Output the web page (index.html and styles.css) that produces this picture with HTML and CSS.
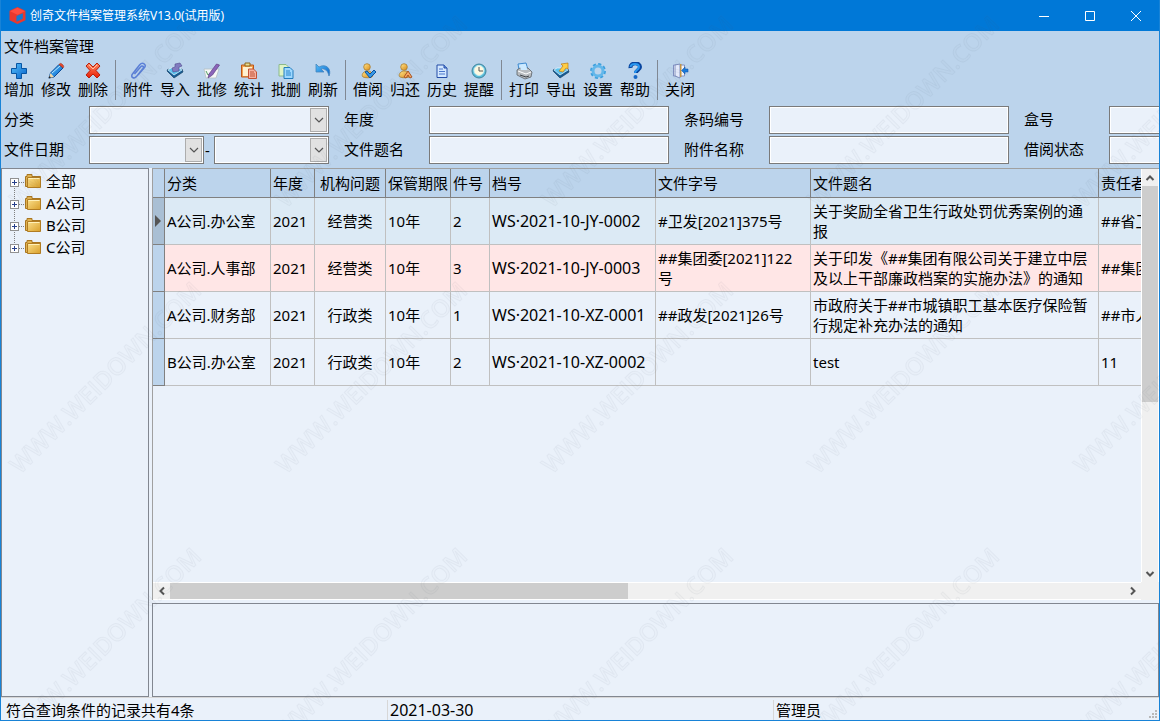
FILE: index.html
```html
<!DOCTYPE html>
<html lang="zh-CN">
<head>
<meta charset="utf-8">
<title>创奇文件档案管理系统V13.0(试用版)</title>
<link rel="stylesheet" href="styles.css">
</head>
<body>
<svg class="defs" width="0" height="0" aria-hidden="true">
  <defs>
    <linearGradient id="blue" x1="0" y1="0" x2="1" y2="1"><stop offset="0" stop-color="#56c0fb"/><stop offset="1" stop-color="#0560c8"/></linearGradient>
    <linearGradient id="red" x1="0" y1="0" x2="0" y2="1"><stop offset="0" stop-color="#ff8a62"/><stop offset="1" stop-color="#e81c05"/></linearGradient>
    <linearGradient id="gold" x1="0" y1="0" x2="1" y2="1"><stop offset="0" stop-color="#ffe58c"/><stop offset="1" stop-color="#df8c14"/></linearGradient>
    <linearGradient id="folder" x1="0" y1="0" x2="1" y2="1"><stop offset="0" stop-color="#fbe08c"/><stop offset="1" stop-color="#d99f2a"/></linearGradient>
    <symbol id="i-folder" viewBox="0 0 16 14"><path d="M.5 12.500V2.500h1.500v-2h5v2h8.500v10z" fill="#dfb252" stroke="#a97621"/><path d="M2.500 13.500v-10h13v10z" fill="url(#folder)" stroke="#b17c22"/><path d="M3.500 4.500h11" stroke="#fff0b8"/></symbol>
    <symbol id="i-down" viewBox="0 0 10 6"><path d="M1 1l4 4 4-4" fill="none" stroke="#555" stroke-width="1.200"/></symbol>
    <symbol id="i-chev" viewBox="0 0 10 10"><path d="M1.500 3l3.500 3.500L8.500 3" fill="none" stroke="#555" stroke-width="2"/></symbol>
    <symbol id="i-tray" viewBox="0 0 18 18"><path d="M1 9l7 7 9-6-1-3-8 4-6-4z" fill="#155b94" stroke="#1c4666" stroke-width=".7"/><path d="M2 8l6 5 8-5-3-2H5z" fill="#5bc3ee" stroke="#e8f6ff" stroke-width=".7"/></symbol>
    <symbol id="i-person" viewBox="0 0 18 18"><path d="M4 15c-2-2 0-5 3-6h3c3 1 5 4 3 6-2 1-7 1-9 0z" fill="url(#gold)" stroke="#a87c30" stroke-width=".8"/><circle cx="8" cy="5" r="3.300" fill="url(#gold)" stroke="#a87c30" stroke-width=".8"/></symbol>
    <pattern id="mark" width="266" height="266" patternUnits="userSpaceOnUse"><text class="mark-text" transform="translate(20 209) rotate(-45)">WWW.WEIDOWN.COM</text></pattern>
  </defs>
</svg>
<div class="window">
  <header class="titlebar">
    <svg class="logo" viewBox="0 0 16 16"><path d="M8 0l7.500 3.500v9L8 16 .5 12.500v-9z" fill="#e9382d"/><path d="M1 4l7 3.300L15 4 8 .7z" fill="#ff4d40"/><path d="M7 8.500l6-2.700v5.200l-6 2.800z" fill="#1479d2"/></svg>
    <h1 class="title">创奇文件档案管理系统V13.0(试用版)</h1>
    <button class="winbtn" aria-label="最小化"><svg viewBox="0 0 10 10"><path d="M0 5.500h10"/></svg></button>
    <button class="winbtn" aria-label="最大化"><svg viewBox="0 0 10 10"><path d="M.5.500h9v9h-9z"/></svg></button>
    <button class="winbtn" aria-label="关闭窗口"><svg viewBox="0 0 10 10"><path d="M0 0l10 10M10 0L0 10"/></svg></button>
  </header>
  <h2 class="caption">文件档案管理</h2>
  <nav class="toolbar">
    <div class="tools">
      <button class="tool"><svg viewBox="0 0 18 18"><path d="M7 3h5v4h4v5h-4v4H7v-4H3V7h4z" fill="#5f7f9c" opacity=".6"/><path d="M6.500 1.500h5v5h5v5h-5v5h-5v-5h-5v-5h5z" fill="url(#blue)" stroke="#0755a3"/></svg>增加</button>
      <button class="tool"><svg viewBox="0 0 18 18"><path d="M2 16l1.500-5L12 2.500 16 6l-9 9z" fill="url(#blue)" stroke="#0a4c99"/><path d="M12 2.500C13 1 14 1 15.500 2.500S17 5 16 6z" fill="#e7482d" stroke="#9f2d1a" stroke-width=".6"/><path d="M2 16l1.500-5L7 15z" fill="#f4d9a8"/><path d="M1.500 16.500l1-2.500 1.500 1.500z" fill="#222"/><path d="M5 11l8-7" stroke="#b8e7ff"/></svg>修改</button>
      <button class="tool"><svg viewBox="0 0 18 18"><path d="M2 4l3-3 4 4 4-4 3 3-4 4.500 4 4.500-3 3-4-4-4 4-3-3 4-4.500z" fill="url(#red)" stroke="#b9200d"/><path d="M5 3l4 4 4-4" fill="none" stroke="#ffc0a5"/></svg>删除</button>
    </div>
    <div class="tools">
      <button class="tool"><svg viewBox="0 0 18 18"><path d="M5.500 12l6-7c1.500-2 4-.5 2.500 1.500l-6.500 8c-2.500 3-6.500.5-4-2.500L10.500 3c3-3.500 7.500-.5 5 2.500L9 13" fill="none" stroke="#5b80d8" stroke-width="1.500"/></svg>附件</button>
      <button class="tool"><svg viewBox="0 0 18 18"><use href="#i-tray"/><path d="M9 2l5-1 2 3-3 1v4l-6 1-1-4 3-1z" fill="#807bc0" stroke="#504b8d" stroke-width=".6"/></svg>导入</button>
      <button class="tool"><svg viewBox="0 0 18 18"><path d="M1 7h15l-3 9H3z" fill="#f5f7f6" stroke="#b5bfc3" stroke-width=".8"/><path d="M3 9l2 4 3-2" fill="none" stroke="#54a163"/><path d="M6 12l7.500-10 3 1-7 10-4.500 3z" fill="#8b64ba" stroke="#604184" stroke-width=".7"/></svg>批修</button>
      <button class="tool"><svg viewBox="0 0 18 18"><path d="M1.500 3h12v12h-12z" fill="#f2a14f" stroke="#bf5617"/><path d="M5 1h5v3H5z" fill="#e9dc94" stroke="#8c671d"/><path d="M3 5h9v9H3z" fill="#fff1d0"/><path d="M8.500 7h5l3 3v6.500h-8z" fill="#f6b2a0" stroke="#c15235"/><path d="M10 10h4M10 12h5M10 14h5" stroke="#c15235"/></svg>统计</button>
      <button class="tool"><svg viewBox="0 0 18 18"><path d="M2 2.500h7l3 3V14H2z" fill="#dff4c7" stroke="#8cba8c"/><path d="M7 5.500h6l3 3v8H7z" fill="#9ed8ff" stroke="#237cbd"/><path d="M9 9h4M9 11h5M9 13h5" stroke="#2886cc"/></svg>批删</button>
      <button class="tool"><svg viewBox="0 0 18 18"><path d="M2 2v8h8L7 7c4-1 7 2 8 7 3-7-3-13-10-9z" fill="url(#blue)" stroke="#4685bd" stroke-width=".8"/></svg>刷新</button>
    </div>
    <div class="tools">
      <button class="tool"><svg viewBox="0 0 18 18"><use href="#i-person"/><path d="M6 10l2-1 3 3 4-4 2 2-6 6z" fill="#3697e6" stroke="#0a529f"/></svg>借阅</button>
      <button class="tool"><svg viewBox="0 0 18 18"><use href="#i-person"/><path d="M8 15l4-6 4 6-2 1-2-3-2 3z" fill="#ffad65" stroke="#a95422"/></svg>归还</button>
      <button class="tool"><svg viewBox="0 0 18 18"><path d="M4 3h7l3 3v9.500H4z" fill="#d3e8ff" stroke="#244da7"/><path d="M11 3v3h3" fill="#6695e0" stroke="#244da7"/><path d="M6 7h4M6 9.500h6M6 12h6" stroke="#4a76cb"/></svg>历史</button>
      <button class="tool"><svg viewBox="0 0 18 18"><circle cx="9" cy="9" r="7" fill="#58bbd7" stroke="#43859e"/><circle cx="9" cy="8.500" r="5" fill="#fff9df" stroke="#c8edf3"/><path d="M9 5v4h4" fill="none" stroke="#555"/></svg>提醒</button>
    </div>
    <div class="tools">
      <button class="tool"><svg viewBox="0 0 18 18"><path d="M3 2l8-1 2 7H4z" fill="#bfe4ff" stroke="#3f8acf"/><path d="M2 8l3-2h8l4 4-1 5-6 2-8-4z" fill="#b8bcc0" stroke="#5c6268" stroke-width=".8"/><path d="M3 9l8 3 5-2" fill="none" stroke="#fff"/><path d="M5 13l6 2 3-1" stroke="#404449" fill="none"/><path d="M4.500 3l6-1 2 6H6z" fill="#cdeaff"/></svg>打印</button>
      <button class="tool"><svg viewBox="0 0 18 18"><use href="#i-tray"/><path d="M9 2l7-1v6l-2-1-3 4-4-1 4-5z" fill="#ffcd42" stroke="#bb7b15" stroke-width=".7"/></svg>导出</button>
      <button class="tool"><svg viewBox="0 0 18 18"><circle cx="9" cy="9" r="6.700" fill="none" stroke="#3c9fdd" stroke-width="2.500" stroke-dasharray="3 2.260"/><circle cx="9" cy="9" r="5" fill="none" stroke="#63b7ea" stroke-width="3"/></svg>设置</button>
      <button class="tool"><svg viewBox="0 0 18 18"><path d="M4.500 6C4 0 14 0 14 5c0 3-4 3-4 6" fill="none" stroke="#08459f" stroke-width="4"/><path d="M4.500 5C5 1 13 1 13 5c0 3-4 3-4 6" fill="none" stroke="#2997ef" stroke-width="2"/><circle cx="9.500" cy="15" r="2" fill="#1767c5"/></svg>帮助</button>
    </div>
    <div class="tools">
      <button class="tool"><svg viewBox="0 0 18 18"><path d="M2.500 3h11v11h-11z" fill="#f5f8ff" stroke="#8190c2"/><path d="M4 3l5-1v14l-5-2z" fill="#e4eafb" stroke="#6c7db2" stroke-width=".8"/><path d="M9 2h1.500v13H9z" fill="#c69645"/><path d="M10.500 8.500L14 5v2h3v3h-3v2z" fill="#187bdd" stroke="#0c52aa" stroke-width=".5"/></svg>关闭</button>
    </div>
  </nav>
  <form class="filters">
    <div class="field"><label for="f-class">分类</label><span class="combo"><select id="f-class"><option></option></select><span class="arrow"><svg><use href="#i-down"/></svg></span></span></div>
    <div class="field"><label for="f-year">年度</label><input id="f-year" type="text"></div>
    <div class="field"><label for="f-code">条码编号</label><input id="f-code" type="text"></div>
    <div class="field"><label for="f-box">盒号</label><input id="f-box" type="text"></div>
    <div class="field"><label for="f-from">文件日期</label><span class="combo"><select id="f-from"><option></option></select><span class="arrow"><svg><use href="#i-down"/></svg></span></span><span class="dash">-</span><span class="combo"><select aria-label="截止日期"><option></option></select><span class="arrow"><svg><use href="#i-down"/></svg></span></span></div>
    <div class="field"><label for="f-name">文件题名</label><input id="f-name" type="text"></div>
    <div class="field"><label for="f-att">附件名称</label><input id="f-att" type="text"></div>
    <div class="field"><label for="f-state">借阅状态</label><input id="f-state" type="text"></div>
  </form>
  <main class="content">
    <ul class="tree">
      <li><button class="expander" aria-label="展开全部"></button><svg class="folder"><use href="#i-folder"/></svg>全部</li>
      <li><button class="expander" aria-label="展开A公司"></button><svg class="folder"><use href="#i-folder"/></svg>A公司</li>
      <li><button class="expander" aria-label="展开B公司"></button><svg class="folder"><use href="#i-folder"/></svg>B公司</li>
      <li><button class="expander" aria-label="展开C公司"></button><svg class="folder"><use href="#i-folder"/></svg>C公司</li>
    </ul>
    <section class="records">
      <div class="grid">
        <div class="viewport">
          <table>
            <colgroup><col class="c-mark"><col class="c-class"><col class="c-year"><col class="c-org"><col class="c-keep"><col class="c-item"><col class="c-file"><col class="c-doc"><col class="c-name"><col class="c-owner"></colgroup>
            <thead><tr><th></th><th>分类</th><th>年度</th><th class="mid">机构问题</th><th>保管期限</th><th>件号</th><th>档号</th><th>文件字号</th><th>文件题名</th><th>责任者</th></tr></thead>
            <tbody>
              <tr class="current"><th><svg class="pointer" viewBox="0 0 6 12"><path d="M0 0l6 6-6 6z"/></svg></th><td>A公司.办公室</td><td>2021</td><td class="mid">经营类</td><td>10年</td><td>2</td><td class="code">WS·2021-10-JY-0002</td><td class="doc">#卫发[2021]375号</td><td>关于奖励全省卫生行政处罚优秀案例的通报</td><td class="cut">##省卫生厅</td></tr>
              <tr class="alert"><th></th><td>A公司.人事部</td><td>2021</td><td class="mid">经营类</td><td>10年</td><td>3</td><td class="code">WS·2021-10-JY-0003</td><td class="doc">##集团委[2021]122号</td><td>关于印发《##集团有限公司关于建立中层及以上干部廉政档案的实施办法》的通知</td><td class="cut">##集团</td></tr>
              <tr><th></th><td>A公司.财务部</td><td>2021</td><td class="mid">行政类</td><td>10年</td><td>1</td><td class="code">WS·2021-10-XZ-0001</td><td class="doc">##政发[2021]26号</td><td>市政府关于##市城镇职工基本医疗保险暂行规定补充办法的通知</td><td class="cut">##市人</td></tr>
              <tr><th></th><td>B公司.办公室</td><td>2021</td><td class="mid">行政类</td><td>10年</td><td>2</td><td class="code">WS·2021-10-XZ-0002</td><td class="doc"></td><td>test</td><td class="cut">11</td></tr>
            </tbody>
          </table>
        </div>
        <div class="vscroll"><button class="step" aria-label="向上"><svg class="up"><use href="#i-chev"/></svg></button><div class="vtrack"><div class="vthumb"></div></div><button class="step" aria-label="向下"><svg><use href="#i-chev"/></svg></button></div>
        <div class="hscroll"><button class="step" aria-label="向左"><svg class="left"><use href="#i-chev"/></svg></button><div class="htrack"><div class="hthumb"></div></div><button class="step" aria-label="向右"><svg class="right"><use href="#i-chev"/></svg></button></div>
        <div class="corner"></div>
      </div>
      <div class="detail"></div>
    </section>
  </main>
  <footer class="status">
    <span>符合查询条件的记录共有4条</span><span class="code">2021-03-30</span><span>管理员</span>
    <svg class="grip" viewBox="0 0 8 8"><path d="M6 0h2v2H6zM3 3h2v2H3zM6 3h2v2H6zM0 6h2v2H0zM3 6h2v2H3zM6 6h2v2H6z"/></svg>
  </footer>
</div>
<svg class="watermark" aria-hidden="true"><rect width="100%" height="100%" fill="url(#mark)"/></svg>
</body>
</html>
```
FILE: styles.css
```css
* { box-sizing: border-box; }
body {
  margin: 0;
  font: 15px/20px "Noto Sans", "Noto Sans CJK SC", sans-serif;
  color: #000;
}
button { margin: 0; padding: 0; border: 0; background: none; font: inherit; color: inherit; }
.defs { position: absolute; }
.window {
  display: flex;
  flex-direction: column;
  height: 100vh;
  overflow: hidden;
  border: 1px solid #1883d7;
  border-top: 0;
  background: #eaf1fa;
}
.titlebar {
  display: flex;
  align-items: center;
  height: 31px;
  flex: none;
  padding-left: 8px;
  background: #0078d7;
  color: #fff;
}
.logo { width: 17px; height: 17px; }
.title { flex: 1; margin: 0 0 0 4px; font-size: 12px; font-weight: 400; }
.winbtn { display: grid; place-items: center; width: 46px; height: 31px; }
.winbtn svg { width: 10px; height: 10px; overflow: visible; fill: none; stroke: #fff; }
.caption {
  flex: none;
  margin: 0;
  padding: 5px 3px 4px;
  font-size: 15px;
  font-weight: 400;
  background: #bcd4ec;
}
.toolbar { display: flex; flex: none; height: 44px; background: #bcd4ec; }
.tools { display: flex; }
.tools + .tools { padding-left: 5px; margin-left: 3px; background: linear-gradient(#808893, #808893) 0 0 / 1px 40px no-repeat; }
.tool {
  display: flex;
  flex-direction: column;
  align-items: center;
  width: 37px;
  padding-right: 1px;
  line-height: 18px;
  white-space: nowrap;
}
.tool svg { width: 18px; height: 18px; margin-top: 2px; flex: none; }
.filters {
  display: grid;
  grid-template-columns: repeat(4, 325px);
  gap: 2px 15px;
  flex: none;
  padding: 2px 3px 4px;
  overflow: hidden;
  background: #bcd4ec;
}
.field { display: flex; height: 28px; align-items: center; }
.field label { width: 85px; flex: none; padding-bottom: 2px; }
.field input, .field select {
  flex: 1;
  width: 100%;
  min-width: 0;
  height: 28px;
  padding: 0 4px;
  border: 1px solid #7a7a7a;
  border-radius: 0;
  box-shadow: inset 0 0 0 1px #fff;
  background: #eaf1fa;
  font: inherit;
  appearance: none;
}
.combo { position: relative; display: flex; flex: 1; }
.arrow {
  position: absolute;
  top: 2px;
  right: 2px;
  bottom: 2px;
  display: grid;
  place-items: center;
  width: 17px;
  border: 1px solid #adadad;
  background: #e1e1e1;
  pointer-events: none;
}
.arrow svg { width: 10px; height: 6px; }
.dash { width: 10px; padding-left: 1px; }
.content { display: flex; flex: 1; min-height: 0; gap: 3px; }
.tree {
  flex: none;
  width: 148px;
  margin: 0;
  padding: 1px 0 0 8px;
  list-style: none;
  border: 1px solid #828790;
}
.tree li {
  display: flex;
  align-items: center;
  height: 22px;
  background:
    repeating-linear-gradient(90deg, #808080 0 1px, transparent 1px 2px) 9px 12px / 7px 1px no-repeat,
    repeating-linear-gradient(#808080 0 1px, transparent 1px 2px) 4px 0 / 1px 22px no-repeat;
}
.tree li:first-child { background-position: 9px 12px, 4px 12px; }
.tree li:last-child { background-size: 7px 1px, 1px 12px; }
.expander {
  width: 9px;
  height: 9px;
  margin: 2px 6px 0 0;
  border: 1px solid #919191;
  background:
    linear-gradient(#27408b, #27408b) center / 5px 1px no-repeat,
    linear-gradient(#27408b, #27408b) center / 1px 5px no-repeat,
    #fff;
}
.folder { width: 16px; height: 14px; margin-right: 5px; }
.records { display: flex; flex-direction: column; flex: 1; min-width: 0; gap: 3px; }
.grid {
  display: grid;
  grid-template: minmax(0, 1fr) 18px / minmax(0, 1fr) 18px;
  flex: 1;
  min-height: 0;
  border: 1px solid #a0a0a0;
  border-width: 1px 0 0 1px;
}
.viewport { overflow: hidden; }
table { width: 1100px; table-layout: fixed; border-collapse: separate; border-spacing: 0; }
.c-mark { width: 12px; }
.c-class { width: 106px; }
.c-year { width: 44px; }
.c-org { width: 71px; }
.c-keep { width: 65px; }
.c-item { width: 39px; }
.c-file { width: 166px; }
.c-doc { width: 155px; }
.c-name { width: 288px; }
th, td {
  padding: 0 2px;
  text-align: left;
  font-weight: 400;
  border: 1px solid #c0c0c0;
  border-width: 0 1px 1px 0;
}
th { border-color: #808080; background: #bcd4ec; white-space: nowrap; }
thead th { height: 29px; }
tbody tr { height: 47px; }
.mid { text-align: center; }
.cut { white-space: nowrap; }
.code { font-size: 16px; }
.doc { padding-right: 12px; }
.current td { background: #dceaf5; }
.current th { background: #a9bfd4; }
.alert td { background: #ffe6e6; }
.pointer { display: block; width: 6px; height: 12px; fill: #555; }
.vscroll, .hscroll, .corner { background: #f0f0f0; }
.vscroll { display: flex; flex-direction: column; border: 1px solid #fff; border-width: 0 1px; }
.hscroll { display: flex; border: 1px solid #fff; border-width: 1px 0; }
.step { display: grid; place-items: center; width: 16px; height: 17px; flex: none; }
.step svg { width: 10px; height: 10px; }
.hscroll .step { width: 17px; height: 15px; }
.up { transform: rotate(180deg); }
.left { transform: rotate(90deg); }
.right { transform: rotate(-90deg); }
.vtrack, .htrack { flex: 1; }
.vthumb { height: 57%; background: #cdcdcd; }
.hthumb { width: 48%; height: 100%; background: #cdcdcd; }
.detail { flex: none; height: 94px; border: 1px solid #828790; }
.status {
  display: grid;
  grid-template-columns: 1fr 1fr 1fr;
  flex: none;
  position: relative;
  height: 23px;
  padding: 2px 0 1px;
  border-top: 1px solid #d7d7d7;
}
.status span { padding: 0 3px 0 5px; line-height: 20px; }
.status span + span { padding-left: 2px; border-left: 1px solid #d7d7d7; }
.grip { position: absolute; right: 2px; bottom: 2px; width: 8px; height: 8px; fill: #b8b8b8; }
.watermark { position: fixed; inset: 0; width: 100%; height: 100%; pointer-events: none; }
.mark-text {
  font: 600 24px "Open Sans", sans-serif;
  fill: #40505f;
  fill-opacity: .01;
  stroke: #40505f;
  stroke-opacity: .05;
  stroke-width: 1px;
}
```
